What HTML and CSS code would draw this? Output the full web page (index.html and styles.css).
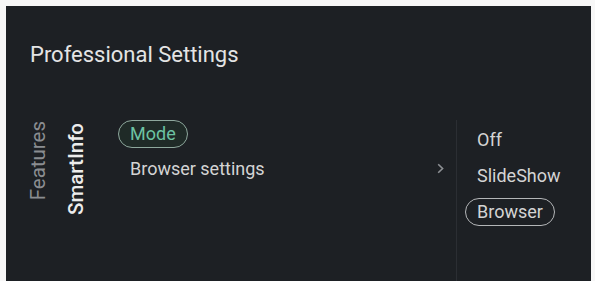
FILE: index.html
```html
<!DOCTYPE html>
<html lang="en">
<head>
<meta charset="utf-8">
<title>Professional Settings</title>
<link rel="stylesheet" href="styles.css">
</head>
<body>
<div class="panel">
  <h1 class="title">Professional Settings</h1>
  <div class="content">
    <div class="tabs">
      <div class="tab tab-dim">Features</div>
      <div class="tab tab-active">SmartInfo</div>
    </div>
    <div class="menu">
      <div class="item item-selected">Mode</div>
      <div class="item item-row">
        <span>Browser settings</span>
        <svg class="chev" width="7" height="11" viewBox="0 0 7 11"><path d="M1.2 1.2 L5.6 5.5 L1.2 9.8" fill="none" stroke="#8d9094" stroke-width="1.6"/></svg>
      </div>
    </div>
    <div class="options">
      <div class="item">Off</div>
      <div class="item">SlideShow</div>
      <div class="item item-outlined">Browser</div>
    </div>
  </div>
</div>
</body>
</html>
```

FILE: styles.css
```css
html, body {
  margin: 0;
  padding: 0;
  background: #f7f7f7;
  overflow: hidden;
}

.panel {
  margin: 6px 4px 0 6px;
  height: 275px;
  background: #1d2024;
  padding: 36px 0 0 22px;
  box-sizing: border-box;
  font-family: Roboto, "Noto Sans", sans-serif;
  display: flex;
  flex-direction: column;
}

.title {
  margin: 0 0 52px 0;
  padding-left: 2px;
  font-size: 22px;
  line-height: 26px;
  font-weight: 400;
  color: #e4e4e4;
}

.content {
  flex: 1;
  display: flex;
  align-items: stretch;
}

.tabs {
  display: flex;
  align-items: flex-start;
  gap: 18px;
  margin-right: 32px;
}

.tab {
  writing-mode: vertical-rl;
  transform: rotate(180deg);
  font-size: 20.5px;
  line-height: 20px;
  white-space: nowrap;
}

.tab-dim {
  color: #8a8d91;
  margin-top: 1px;
}

.tab-active {
  color: #ececec;
  font-weight: 500;
  margin-top: 3px;
}

.menu {
  flex: 1;
  display: flex;
  flex-direction: column;
  align-items: flex-start;
  gap: 7px;
}

.item {
  font-size: 18px;
  line-height: 22px;
  padding: 2px 11px;
  border: 1.5px solid transparent;
  border-radius: 16px;
  color: #d4d4d4;
  white-space: nowrap;
}

.item-selected {
  color: #6cc2a2;
  border-color: #8ea89d;
  background: #1f2a27;
}

.item-row {
  align-self: stretch;
  display: flex;
  justify-content: space-between;
  align-items: center;
}

.chev {
  display: block;
  margin-top: -1px;
}

.options {
  width: 135px;
  border-left: 1px solid #2b2e33;
  padding: 6px 0 0 8px;
  box-sizing: border-box;
  display: flex;
  flex-direction: column;
  align-items: flex-start;
  gap: 8px;
}

.item-outlined {
  border-color: #b4b6b8;
}
```
